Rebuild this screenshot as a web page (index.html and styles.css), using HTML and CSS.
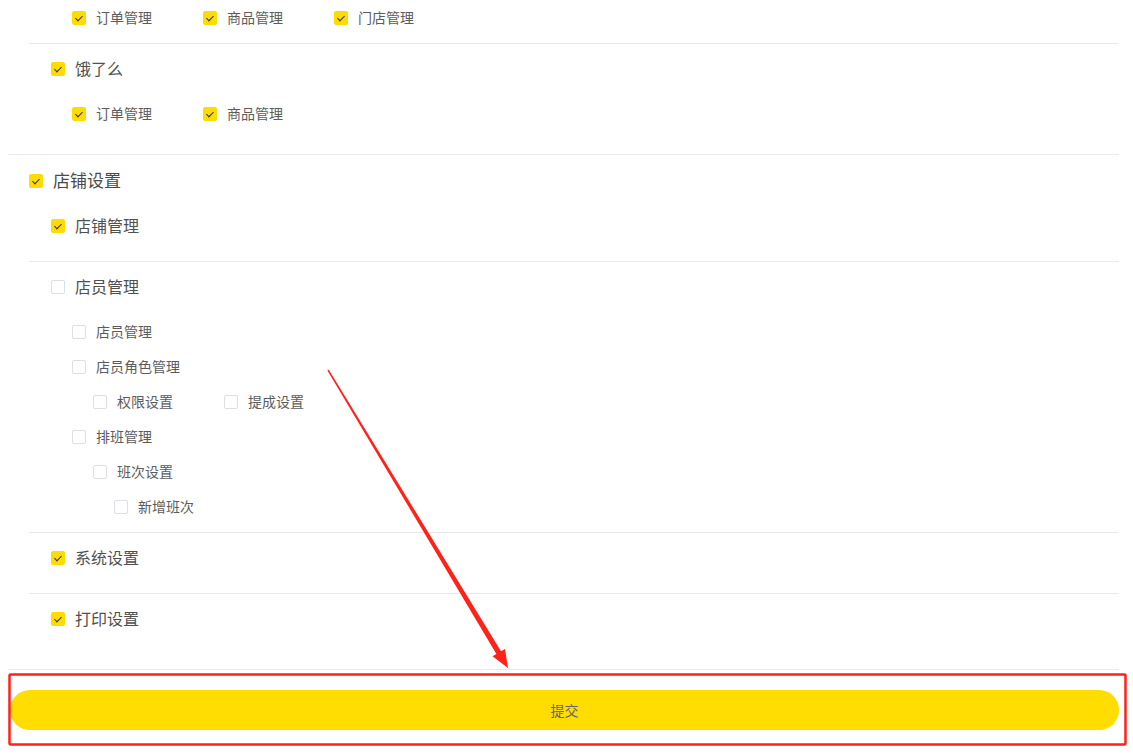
FILE: index.html
```html
<!DOCTYPE html>
<html lang="zh">

<head>
    <meta charset="UTF-8" />
    <meta name="viewport" content="width=device-width, initial-scale=1.0" />
    <title>权限设置</title>
    <link rel="stylesheet" href="styles.css">
</head>

<body>
    <div class="page">
        <section class="top">
            <!-- 页面已向下滚动，这两行在视口上方 -->
            <label class="row lv0 above"><span class="box on"></span>外卖设置</label>
            <div class="group">
                <label class="row lv1 above"><span class="box on"></span>美团</label>
                <div class="kids">
                    <div class="line">
                        <label class="row lv2"><span class="box on"></span>订单管理</label>
                        <label class="row lv2"><span class="box on"></span>商品管理</label>
                        <label class="row lv2"><span class="box on"></span>门店管理</label>
                    </div>
                </div>
            </div>
            <div class="group">
                <label class="row lv1"><span class="box on"></span>饿了么</label>
                <div class="kids">
                    <div class="line">
                        <label class="row lv2"><span class="box on"></span>订单管理</label>
                        <label class="row lv2"><span class="box on"></span>商品管理</label>
                    </div>
                </div>
            </div>
        </section>

        <section class="top">
            <label class="row lv0"><span class="box on"></span>店铺设置</label>
            <div class="group">
                <label class="row lv1"><span class="box on"></span>店铺管理</label>
            </div>
            <div class="group">
                <label class="row lv1"><span class="box"></span>店员管理</label>
                <div class="kids">
                    <label class="row lv2"><span class="box"></span>店员管理</label>
                    <label class="row lv2"><span class="box"></span>店员角色管理</label>
                    <div class="sub">
                        <div class="line">
                            <label class="row lv2"><span class="box"></span>权限设置</label>
                            <label class="row lv2"><span class="box"></span>提成设置</label>
                        </div>
                    </div>
                    <label class="row lv2"><span class="box"></span>排班管理</label>
                    <div class="sub">
                        <label class="row lv2"><span class="box"></span>班次设置</label>
                        <div class="sub">
                            <label class="row lv2"><span class="box"></span>新增班次</label>
                        </div>
                    </div>
                </div>
            </div>
            <div class="group">
                <label class="row lv1"><span class="box on"></span>系统设置</label>
            </div>
            <div class="group">
                <label class="row lv1"><span class="box on"></span>打印设置</label>
            </div>
        </section>

        <div class="submit">
            <button type="button">提交</button>
        </div>
    </div>

    <!-- 标注：红色箭头和框 -->
    <svg class="mark" width="1133" height="754" viewBox="0 0 1133 754">
        <polygon fill="#fe2218" points="328.6,369.4 501,651.3 505,649 508,668 492.5,656.3 496.4,653.9 327.4,370.6" />
        <rect x="9.5" y="674.5" width="1116" height="70" fill="none" stroke="#fe2218" stroke-width="2.5" rx="1" />
    </svg>
</body>

</html>
```

FILE: styles.css
```css
* {
    box-sizing: border-box;
}

body {
    margin: 0;
    background: #fff;
    font-family: "Noto Sans CJK SC", "Noto Sans", sans-serif;
    color: #555;
    overflow: hidden;
}

.page {
    width: 1111px;
    margin: -98px 0 0 8px;
}

.top {
    padding: 15px 0 15px 21px;
    border-bottom: 1px solid #e9e9e9;
}

.group {
    padding: 15px 0 16px 22px;
}

.group+.group {
    border-top: 1px solid #e9e9e9;
    padding-top: 14px;
}

.row {
    display: flex;
    align-items: center;
    height: 20px;
    line-height: 20px;
    gap: 10px;
    white-space: nowrap;
}

.row.above {
    visibility: hidden;
}

.lv0 {
    font-size: 17px;
    color: #4a4a4a;
    margin-bottom: 10px;
}

.lv1 {
    font-size: 16px;
    color: #505050;
    margin-bottom: 10px;
}

.lv2 {
    font-size: 14px;
    color: #5c5c5c;
    gap: 10px;
}

.kids {
    padding: 15px 0 0 21px;
    display: flex;
    flex-direction: column;
    gap: 15px;
}

.sub {
    padding-left: 21px;
    display: flex;
    flex-direction: column;
    gap: 15px;
}

.line {
    display: flex;
    gap: 51px;
}

.line .row {
    width: 80px;
}

.box {
    position: relative;
    flex: none;
    width: 14px;
    height: 14px;
    margin-top: 1px;
    border: 1px solid #dcdfe6;
    border-radius: 2px;
    background: #fff;
}

.box.on {
    background: #ffdc00;
    border-color: #ffdc00;
}

.box.on::after {
    content: "";
    position: absolute;
    left: 4px;
    top: 2px;
    width: 3px;
    height: 6px;
    border-right: 1px solid #333;
    border-bottom: 1px solid #333;
    transform: rotate(45deg);
}

.submit {
    padding: 20px 0 0 2px;
}

.submit button {
    display: block;
    width: 1109px;
    height: 40px;
    border: 0;
    border-radius: 20px;
    background: #ffdd00;
    color: #666;
    font-family: "Noto Sans CJK SC", "Noto Sans", sans-serif;
    font-size: 14px;
}

.mark {
    position: absolute;
    top: 0;
    left: 0;
    pointer-events: none;
}
```
